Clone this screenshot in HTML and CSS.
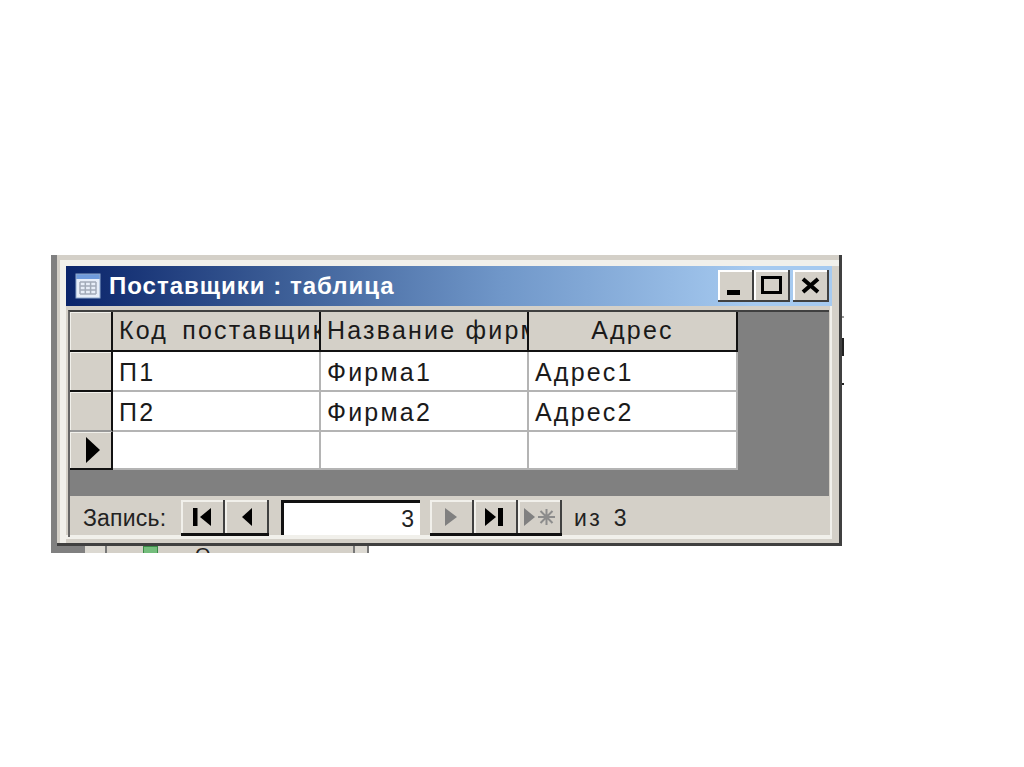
FILE: index.html
```html
<!DOCTYPE html>
<html lang="ru">
<head>
<meta charset="utf-8">
<title>Поставщики : таблица</title>
<link rel="stylesheet" href="styles.css">
</head>
<body>
<div class="desktop">
  <div class="back-window">
    <span class="back-cell cell-a"></span>
    <span class="back-cell cell-b"></span>
    <span class="back-icon"></span>
    <span class="back-text">О</span>
    <span class="back-cell cell-c"></span>
    <span class="tick tick-a"></span>
    <span class="tick tick-b"></span>
    <span class="tick tick-c"></span>
  </div>
  <div class="window">
    <header class="titlebar">
      <svg class="app-icon" width="26" height="26" viewBox="0 0 26 26">
        <rect x="1" y="1" width="24" height="24" fill="#e8eef8"/>
        <rect x="1" y="1" width="24" height="5" fill="#6f9bdc"/>
        <rect x="1" y="1" width="24" height="24" fill="none" stroke="#8fa9cc"/>
        <path d="M5 9h16M5 13h16M5 17h16M5 21h16M5 9v12M10.300 9v12M15.600 9v12M21 9v12" stroke="#a3abb8" stroke-width="1.500" fill="none"/>
      </svg>
      <span class="title">Поставщики : таблица</span>
      <div class="controls">
        <button class="ctl"><svg width="36" height="26" viewBox="0 0 36 26"><rect x="9" y="17" width="13" height="5" fill="#000"/></svg></button>
        <button class="ctl"><svg width="36" height="26" viewBox="0 0 36 26"><rect x="8.500" y="4.500" width="18" height="15" fill="none" stroke="#000" stroke-width="3"/></svg></button>
        <button class="ctl ctl-close"><svg width="36" height="26" viewBox="0 0 36 26"><path d="M10 6l15 13M25 6L10 19" stroke="#000" stroke-width="4" fill="none"/></svg></button>
      </div>
    </header>
    <div class="workspace">
      <div class="sheet">
        <div class="sel sel-head"></div>
        <div class="head head-wide">Код поставщик</div>
        <div class="head">Название фирмы</div>
        <div class="head head-center">Адрес</div>

        <div class="sel"></div>
        <div class="cell">П1</div>
        <div class="cell">Фирма1</div>
        <div class="cell">Адрес1</div>

        <div class="sel sel-soft"></div>
        <div class="cell">П2</div>
        <div class="cell">Фирма2</div>
        <div class="cell">Адрес2</div>

        <div class="sel sel-current"><svg width="14" height="26" viewBox="0 0 14 26"><path d="M0 0l14 13L0 26z" fill="#000"/></svg></div>
        <div class="cell cell-last"></div>
        <div class="cell cell-last"></div>
        <div class="cell cell-last"></div>
      </div>
    </div>
    <footer class="nav">
      <span class="nav-label">Запись:</span>
      <div class="nav-group">
        <button class="nav-btn"><svg width="24" height="18" viewBox="0 0 24 18"><rect x="2" y="0" width="4.500" height="18" fill="#000"/><path d="M20 0v18L9 9z" fill="#000"/></svg></button>
        <button class="nav-btn"><svg width="24" height="18" viewBox="0 0 24 18"><path d="M17 0v18L7 9z" fill="#000"/></svg></button>
      </div>
      <div class="nav-input">3</div>
      <div class="nav-group">
        <button class="nav-btn"><svg width="24" height="18" viewBox="0 0 24 18"><path d="M5 0v18l12-9z" fill="#808080"/></svg></button>
        <button class="nav-btn"><svg width="24" height="18" viewBox="0 0 24 18"><path d="M1 0v18l11-9z" fill="#000"/><rect x="14" y="0" width="5" height="18" fill="#000"/></svg></button>
        <button class="nav-btn"><svg width="34" height="18" viewBox="0 0 34 18"><path d="M1 0v18l11-9z" fill="#808080"/><path d="M23.500 1v16M15 9h17M17.500 3l12 12M29.500 3l-12 12" stroke="#8c8c8c" stroke-width="2" fill="none"/></svg></button>
      </div>
      <span class="nav-total">из 3</span>
    </footer>
  </div>
</div>
</body>
</html>
```

FILE: styles.css
```css
html, body {
  margin: 0;
  padding: 0;
  background: #fff;
}
.desktop {
  position: relative;
  width: 1024px;
  height: 767px;
  overflow: hidden;
}
.back-window {
  position: absolute;
  left: 51px;
  top: 255px;
  width: 793px;
  height: 298px;
  overflow: hidden;
}
.back-window::before {
  content: "";
  position: absolute;
  left: 0;
  top: 0;
  width: 6px;
  height: 298px;
  background: #808080;
}
.back-window::after {
  content: "";
  position: absolute;
  left: 0;
  bottom: 0;
  width: 34px;
  height: 7px;
  background: #808080;
}
.back-cell {
  position: absolute;
  bottom: 0;
  height: 7px;
}
.cell-a {
  left: 34px;
  width: 20px;
  background: #dcd9d2;
  border-right: 2px solid #777;
}
.cell-b {
  left: 56px;
  width: 246px;
  background: #d4d0c8;
  border-right: 2px solid #777;
}
.cell-c {
  left: 304px;
  width: 12px;
  background: #dcd9d2;
  border-right: 2px solid #777;
}
.back-icon {
  position: absolute;
  left: 92px;
  bottom: 0;
  width: 13px;
  height: 6px;
  background: #74bd7c;
  border: 1px solid #3a8a47;
  border-bottom: 0;
  z-index: 1;
}
.back-text {
  position: absolute;
  left: 144px;
  top: 288px;
  font: 20px/24px "Liberation Sans", sans-serif;
  color: #222;
  z-index: 1;
}
.tick {
  position: absolute;
  left: 791px;
  width: 2px;
  background: #222;
}
.tick-a { top: 61px; height: 2px; background: #999; }
.tick-b { top: 83px; height: 18px; }
.tick-c { top: 128px; height: 2px; }
.window {
  position: absolute;
  left: 57px;
  top: 255px;
  width: 785px;
  height: 291px;
  box-sizing: border-box;
  padding: 11px 7px 0 9px;
  background: #d4d0c8;
  border-right: 3px solid #404040;
  border-bottom: 3px solid #404040;
  box-shadow:
    inset 3px 5px 0 #d4d0c8,
    inset 9px 11px 0 #f1f0eb,
    inset -7px -4px 0 #d4d0c8,
    inset -9px -8px 0 #f1f0eb;
  display: flex;
  flex-direction: column;
  font-family: "Liberation Sans", sans-serif;
}
.titlebar {
  height: 40px;
  flex: none;
  display: flex;
  align-items: center;
  padding: 0 3px 0 9px;
  background: linear-gradient(90deg, #0a246a 0%, #3f6199 30%, #7097c9 57%, #a6caf0 90%, #a6caf0 100%);
}
.app-icon {
  flex: none;
}
.title {
  margin-left: 8px;
  color: #fff;
  font-size: 24px;
  font-weight: bold;
  letter-spacing: 1px;
  white-space: nowrap;
}
.controls {
  margin-left: auto;
  display: flex;
}
.ctl {
  width: 36px;
  height: 32px;
  padding: 0;
  margin: 0;
  background: #d4d0c8;
  border: 0;
  box-shadow: inset -2px -2px 0 #404040, inset 2px 2px 0 #fff;
  display: flex;
  align-items: center;
  justify-content: center;
}
.ctl-close {
  margin-left: 3px;
}
.workspace {
  margin: 4px 3px 0 2px;
  height: 186px;
  flex: none;
  background: #808080;
  border-top: 2px solid #404040;
  border-left: 2px solid #666;
  box-sizing: border-box;
}
.sheet {
  display: grid;
  grid-template-columns: 43px 208px 208px 209px;
  grid-template-rows: 40px 40px 40px 38px;
  width: 668px;
}
.sel, .head {
  background: #d4d0c8;
  box-sizing: border-box;
  border-right: 2px solid #111;
  border-bottom: 2px solid #111;
}
.sel {
  box-shadow: inset 1px 1px 0 #f1f0eb;
}
.sel-soft {
  border-bottom-color: #999;
}
.sel-current {
  display: flex;
  align-items: center;
  padding-left: 16px;
}
.head {
  font-size: 25px;
  letter-spacing: 2.2px;
  line-height: 37px;
  padding-left: 6px;
  color: #1a1a1a;
  overflow: hidden;
  white-space: nowrap;
}
.head-wide {
  word-spacing: 5px;
}
.head-center {
  text-align: center;
  padding-left: 0;
}
.cell {
  background: #fff;
  box-sizing: border-box;
  border-right: 2px solid #b4b4b4;
  border-bottom: 2px solid #b4b4b4;
  font-size: 25px;
  letter-spacing: 2.2px;
  line-height: 41px;
  padding-left: 6px;
  color: #1a1a1a;
  white-space: nowrap;
}
.nav {
  flex: 1;
  margin: 0 2px 8px 2px;
  display: flex;
  align-items: flex-start;
  padding-top: 4px;
  box-sizing: border-box;
  border-left: 2px solid #666;
}
.nav-label {
  margin-left: 13px;
  width: 98px;
  font-size: 23px;
  letter-spacing: 0.2px;
  line-height: 37px;
  color: #222;
}
.nav-group {
  display: flex;
  border-bottom: 3px solid #111;
  height: 33px;
}
.nav-btn {
  width: 44px;
  height: 33px;
  padding: 0;
  background: #d4d0c8;
  border: 0;
  box-shadow: inset -2px 0 0 #404040, inset 2px 2px 0 #f1f0eb;
  display: flex;
  align-items: center;
  justify-content: center;
}
.nav-input {
  margin: 0 10px 0 12px;
  width: 139px;
  height: 35px;
  box-sizing: border-box;
  background: #fff;
  border-top: 3px solid #111;
  border-left: 3px solid #111;
  font-size: 23px;
  line-height: 32px;
  text-align: right;
  padding-right: 6px;
  color: #222;
}
.nav-total {
  margin-left: 12px;
  font-size: 23px;
  letter-spacing: 2.3px;
  word-spacing: 3px;
  line-height: 37px;
  color: #222;
}
```
